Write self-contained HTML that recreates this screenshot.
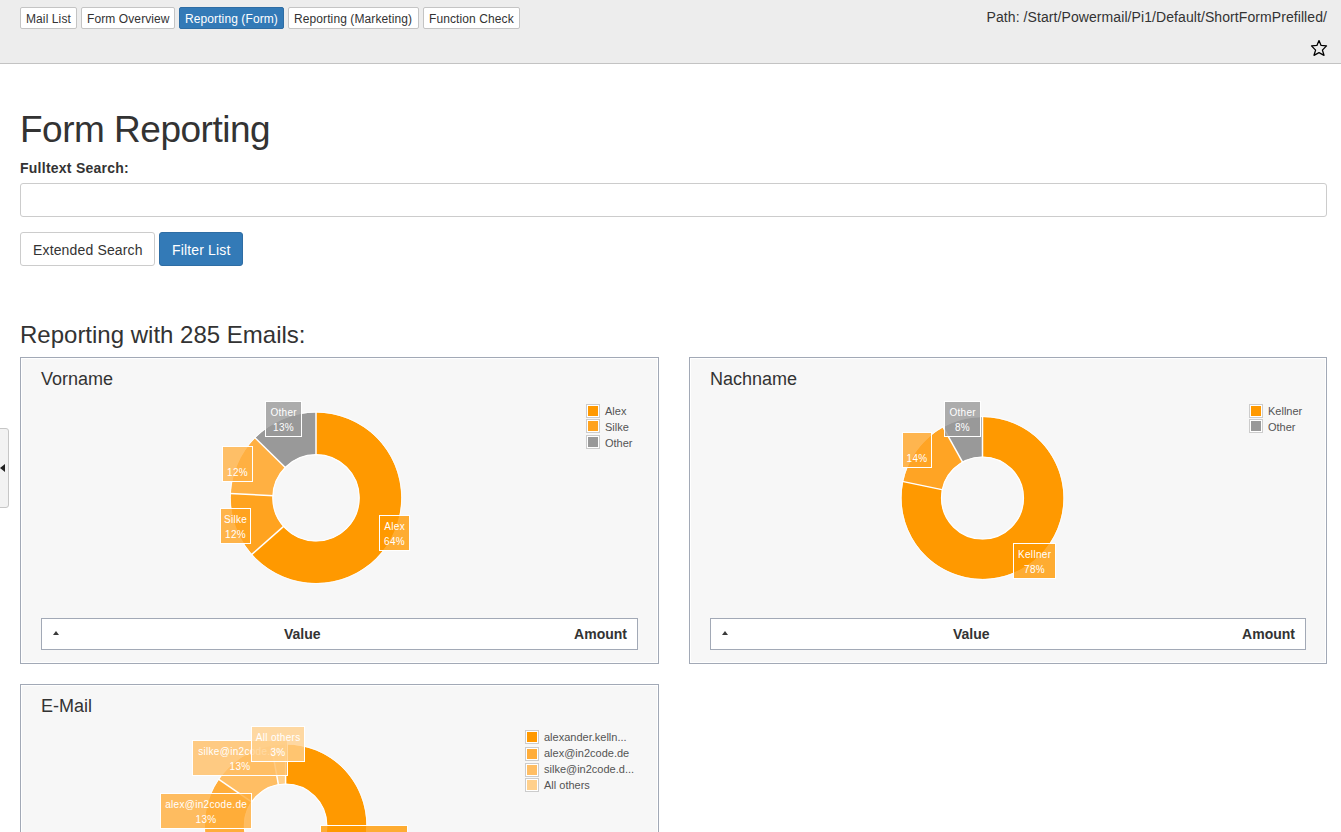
<!DOCTYPE html>
<html><head><meta charset="utf-8">
<style>
*{box-sizing:border-box;margin:0;padding:0}
html,body{width:1341px;height:832px;overflow:hidden;background:#fff;font-family:"Liberation Sans",sans-serif;color:#333}
.abs{position:absolute}
#hdr{position:absolute;left:0;top:0;width:1341px;height:64px;background:#ededed;border-bottom:1px solid #c3c3c3}
.nb{position:absolute;top:7px;height:22px;border:1px solid #c4c4c4;border-radius:2px;background:#fff;font-size:12px;line-height:18px;padding:2px 0 0 5px;white-space:nowrap;color:#333;letter-spacing:0.1px}
.nb.act{background:#337ab7;border-color:#2e6da4;color:#fff}
#path{position:absolute;right:14px;top:8px;font-size:14px;line-height:18px;color:#333;white-space:nowrap;letter-spacing:0.08px}
h1{position:absolute;left:20px;top:108px;font-size:37px;font-weight:normal;line-height:44px;white-space:nowrap;letter-spacing:-0.5px}
#lbl{position:absolute;left:20px;top:159px;font-size:14px;font-weight:bold;line-height:18px;letter-spacing:0.25px}
#inp{position:absolute;left:20px;top:183px;width:1307px;height:34px;border:1px solid #ccc;border-radius:3px;background:#fff}
.btn{position:absolute;top:232px;height:34px;border:1px solid #ccc;border-radius:3px;background:#fff;font-size:14px;line-height:20px;padding:7px 0 0 12px;white-space:nowrap;letter-spacing:0.15px}
.btn.pri{background:#337ab7;border-color:#2e6da4;color:#fff}
h2{position:absolute;left:20px;top:321px;font-size:24px;font-weight:normal;line-height:28px;white-space:nowrap}
.box{position:absolute;border:1px solid #a2a9b6;background:#f7f7f7;box-shadow:inset 0 0 0 1px #fff}
.box h3{position:absolute;left:20px;top:11px;font-size:18px;font-weight:normal;line-height:20px;white-space:nowrap}
.tbl{position:absolute;left:20px;width:597px;height:32px;border:1px solid #a2a9b6;background:#fff;font-size:14px;font-weight:bold}
.tbl .c1{position:absolute;left:11px;top:12px;width:0;height:0;border-left:3px solid transparent;border-right:3px solid transparent;border-bottom:4px solid #3a3a3a}
.tbl .c2{position:absolute;left:242px;top:6px;line-height:18px}
.tbl .c3{position:absolute;right:10px;top:6px;line-height:18px}
#tab{position:absolute;left:-3px;top:428px;width:12px;height:80px;border:1px solid #c6c6c6;border-radius:3px;background:#f2f2f2}
#tab i{position:absolute;left:2px;top:35px;width:0;height:0;border-top:4px solid transparent;border-bottom:4px solid transparent;border-right:5px solid #222}
.pl{position:absolute;border:1px solid #fff;color:#fff;font-size:10px;line-height:15px;padding-top:3px;letter-spacing:0.3px;text-indent:0.3px;text-align:center;white-space:nowrap;overflow:hidden}
.lsw{position:absolute;width:14px;height:14px;border:1px solid #ccc;padding:1px;background:#fff}
.lsw i{display:block;width:10px;height:10px}
.ltx{position:absolute;font-size:11px;line-height:16px;color:#545454;white-space:nowrap}
</style></head><body>
<div id="hdr">
  <div class="nb" style="left:20px;width:57px">Mail List</div>
  <div class="nb" style="left:81px;width:94px">Form Overview</div>
  <div class="nb act" style="left:179px;width:105px">Reporting (Form)</div>
  <div class="nb" style="left:288px;width:131px">Reporting (Marketing)</div>
  <div class="nb" style="left:423px;width:97px">Function Check</div>
  <div id="path">Path: /Start/Powermail/Pi1/Default/ShortFormPrefilled/</div>
  <svg class="abs" style="left:1310px;top:39px" width="18" height="18" viewBox="0 0 18 18"><path d="M9 1.6 L11.1 6.4 L16.5 6.9 L12.4 11.1 L14 16.3 L9 13.7 L4 16.3 L5.6 11.1 L1.5 6.9 L6.9 6.4 Z" fill="none" stroke="#000" stroke-width="1.3" stroke-linejoin="round"/></svg>
</div>
<div id="tab"><i></i></div>
<h1>Form Reporting</h1>
<div id="lbl">Fulltext Search:</div>
<div id="inp"></div>
<div class="btn" style="left:20px;width:135px">Extended Search</div>
<div class="btn pri" style="left:159px;width:84px">Filter List</div>
<h2>Reporting with 285 Emails:</h2>

<div class="box" style="left:20px;top:357px;width:639px;height:307px">
  <h3>Vorname</h3>
  <div class="tbl" style="top:260px"><div class="c1"></div><div class="c2">Value</div><div class="c3">Amount</div></div>
</div>
<div class="box" style="left:689px;top:357px;width:638px;height:307px">
  <h3>Nachname</h3>
  <div class="tbl" style="top:260px;width:596px"><div class="c1"></div><div class="c2">Value</div><div class="c3">Amount</div></div>
</div>
<div class="box" style="left:20px;top:684px;width:639px;height:200px">
  <h3>E-Mail</h3>
</div>
<svg class="abs" style="left:0;top:0" width="1341" height="832" viewBox="0 0 1341 832">
<path d="M316.00 412.50A85.3 85.3 0 1 1 251.98 554.17L283.43 526.48A43.4 43.4 0 1 0 316.00 454.40Z" fill="#ff9900"/>
<path d="M251.98 554.17A85.3 85.3 0 0 1 230.80 493.57L272.65 495.65A43.4 43.4 0 0 0 283.43 526.48Z" fill="#ffa31f"/>
<path d="M230.80 493.57A85.3 85.3 0 0 1 255.19 437.98L285.06 467.37A43.4 43.4 0 0 0 272.65 495.65Z" fill="#ffb042"/>
<path d="M255.19 437.98A85.3 85.3 0 0 1 316.00 412.50L316.00 454.40A43.4 43.4 0 0 0 285.06 467.37Z" fill="#999999"/>
<line x1="316.00" y1="455.40" x2="316.00" y2="411.50" stroke="#fff" stroke-width="1.5"/>
<line x1="284.18" y1="525.82" x2="251.23" y2="554.84" stroke="#fff" stroke-width="1.5"/>
<line x1="273.65" y1="495.70" x2="229.81" y2="493.52" stroke="#fff" stroke-width="1.5"/>
<line x1="285.77" y1="468.07" x2="254.47" y2="437.28" stroke="#fff" stroke-width="1.5"/>
<circle cx="316.0" cy="497.8" r="85.7" fill="none" stroke="rgba(255,255,255,0.8)" stroke-width="1"/>
<circle cx="316.0" cy="497.8" r="43.199999999999996" fill="none" stroke="#fff" stroke-width="1.2"/>
<path d="M982.50 417.00A81.0 81.0 0 1 1 903.18 481.60L942.15 489.66A41.2 41.2 0 1 0 982.50 456.80Z" fill="#ff9900"/>
<path d="M903.18 481.60A81.0 81.0 0 0 1 943.17 427.19L962.49 461.98A41.2 41.2 0 0 0 942.15 489.66Z" fill="#ffa424"/>
<path d="M943.17 427.19A81.0 81.0 0 0 1 982.50 417.00L982.50 456.80A41.2 41.2 0 0 0 962.49 461.98Z" fill="#999999"/>
<line x1="982.50" y1="457.80" x2="982.50" y2="416.00" stroke="#fff" stroke-width="1.5"/>
<line x1="943.13" y1="489.86" x2="902.20" y2="481.39" stroke="#fff" stroke-width="1.5"/>
<line x1="962.98" y1="462.86" x2="942.68" y2="426.32" stroke="#fff" stroke-width="1.5"/>
<circle cx="982.5" cy="498.0" r="81.4" fill="none" stroke="rgba(255,255,255,0.8)" stroke-width="1"/>
<circle cx="982.5" cy="498.0" r="41.0" fill="none" stroke="#fff" stroke-width="1.2"/>
<path d="M285.60 744.40A80.8 80.8 0 1 1 206.66 842.43L245.15 834.03A41.4 41.4 0 1 0 285.60 783.80Z" fill="#ff9900"/>
<path d="M206.66 842.43A80.8 80.8 0 0 1 218.95 779.53L251.45 801.80A41.4 41.4 0 0 0 245.15 834.03Z" fill="#ffad3a"/>
<path d="M218.95 779.53A80.8 80.8 0 0 1 271.42 745.65L278.34 784.44A41.4 41.4 0 0 0 251.45 801.80Z" fill="#ffbe64"/>
<path d="M271.42 745.65A80.8 80.8 0 0 1 285.60 744.40L285.60 783.80A41.4 41.4 0 0 0 278.34 784.44Z" fill="#ffd08c"/>
<line x1="285.60" y1="784.80" x2="285.60" y2="743.40" stroke="#fff" stroke-width="1.5"/>
<line x1="246.13" y1="833.82" x2="205.68" y2="842.65" stroke="#fff" stroke-width="1.5"/>
<line x1="252.27" y1="802.36" x2="218.12" y2="778.96" stroke="#fff" stroke-width="1.5"/>
<line x1="278.51" y1="785.43" x2="271.25" y2="744.67" stroke="#fff" stroke-width="1.5"/>
<circle cx="285.6" cy="825.2" r="81.2" fill="none" stroke="rgba(255,255,255,0.8)" stroke-width="1"/>
<circle cx="285.6" cy="825.2" r="41.199999999999996" fill="none" stroke="#fff" stroke-width="1.2"/>
</svg>
<div class="pl" style="left:265px;top:401px;width:37px;height:36px;background:rgba(153,153,153,0.8)">Other<br>13%</div>
<div class="pl" style="left:222px;top:446px;width:31px;height:36px;background:rgba(255,176,66,0.8)"><br>12%</div>
<div class="pl" style="left:220px;top:508px;width:31px;height:36px;background:rgba(255,163,31,0.8)">Silke<br>12%</div>
<div class="pl" style="left:379px;top:515px;width:31px;height:36px;background:rgba(255,153,0,0.8)">Alex<br>64%</div>
<div class="pl" style="left:944px;top:401px;width:37px;height:36px;background:rgba(153,153,153,0.8)">Other<br>8%</div>
<div class="pl" style="left:902px;top:432px;width:30px;height:36px;background:rgba(255,164,36,0.8)"><br>14%</div>
<div class="pl" style="left:1013px;top:543px;width:43px;height:36px;background:rgba(255,153,0,0.8)">Kellner<br>78%</div>
<div class="pl" style="left:320px;top:825px;width:88px;height:36px;background:rgba(255,153,0,0.8)">alexander.kelln...<br>72%</div>
<div class="pl" style="left:160px;top:793px;width:92px;height:36px;background:rgba(255,173,58,0.8)">alex@in2code.de<br>13%</div>
<div class="pl" style="left:192px;top:740px;width:96px;height:36px;background:rgba(255,190,100,0.8)">silke@in2code.de<br>13%</div>
<div class="pl" style="left:251px;top:726px;width:54px;height:36px;background:rgba(255,208,140,0.8)">All others<br>3%</div>
<div class="lsw" style="left:586px;top:404px"><i style="background:#ff9900"></i></div><div class="ltx" style="left:605px;top:403px">Alex</div>
<div class="lsw" style="left:586px;top:419.3px"><i style="background:#ffa31f"></i></div><div class="ltx" style="left:605px;top:419px">Silke</div>
<div class="lsw" style="left:586px;top:435.3px"><i style="background:#999999"></i></div><div class="ltx" style="left:605px;top:435px">Other</div>
<div class="lsw" style="left:1249px;top:404px"><i style="background:#ff9900"></i></div><div class="ltx" style="left:1268px;top:403px">Kellner</div>
<div class="lsw" style="left:1249px;top:419.1px"><i style="background:#999999"></i></div><div class="ltx" style="left:1268px;top:419px">Other</div>
<div class="lsw" style="left:525px;top:730.4px"><i style="background:#ff9900"></i></div><div class="ltx" style="left:544px;top:729.4px">alexander.kelln...</div>
<div class="lsw" style="left:525px;top:746.5px"><i style="background:#ffad3a"></i></div><div class="ltx" style="left:544px;top:745.4px">alex@in2code.de</div>
<div class="lsw" style="left:525px;top:762.5px"><i style="background:#ffbe64"></i></div><div class="ltx" style="left:544px;top:761.4px">silke@in2code.d...</div>
<div class="lsw" style="left:525px;top:778.4px"><i style="background:#ffd08c"></i></div><div class="ltx" style="left:544px;top:777.4px">All others</div>
</body></html>
